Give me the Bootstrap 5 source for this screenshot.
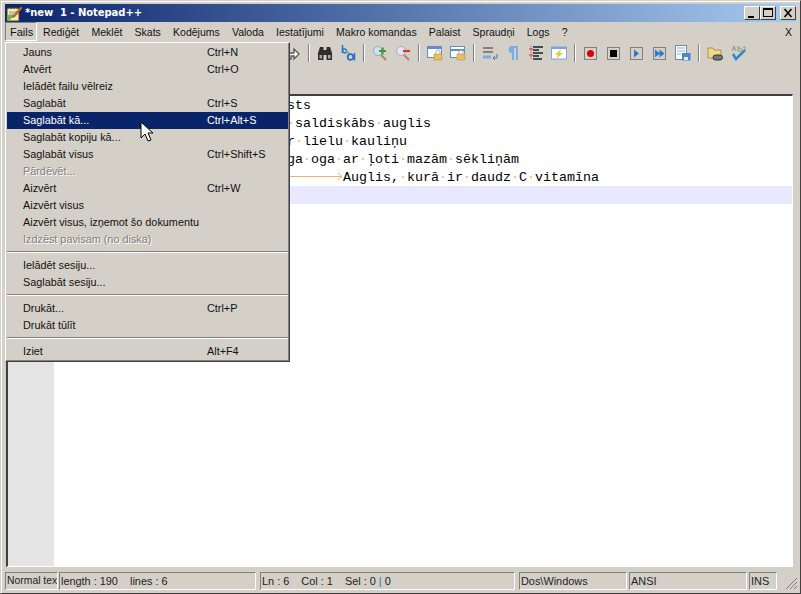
<!DOCTYPE html>
<html lang="en">
<head>
<meta charset="UTF-8">
<title>*new 1 - Notepad++</title>
<link rel="stylesheet" href="https://cdn.jsdelivr.net/npm/bootstrap@5.3.3/dist/css/bootstrap.min.css">
<script src="https://cdn.jsdelivr.net/npm/bootstrap@5.3.3/dist/js/bootstrap.bundle.min.js"></script>
<style>
html,body{margin:0;height:594px;overflow:hidden;background:#d4d0c8}
body{font:11px/13px "Liberation Sans",sans-serif;color:#000}
.npp-win{position:relative;width:801px;height:594px;background:#d4d0c8;padding:3px 4px 4px;border:1px solid #404040;border-top-color:#d4d0c8;border-left-color:#d4d0c8;box-shadow:inset 1px 1px 0 #fff}
.npp-title{height:18px;background:linear-gradient(90deg,#0a246a,#a6caf0);color:#fff;font:bold 10px/18px "DejaVu Sans",sans-serif;padding-left:1px;letter-spacing:-.05px}
.npp-title>svg{margin-right:2px}
.win-btn{width:16px;height:14px;background:#d4d0c8;border:1px solid;border-color:#fff #404040 #404040 #fff}
.win-btn svg{display:block}
.npp-menu{height:20px;font:10.5px/20px "Liberation Sans",Arial,sans-serif;color:#111}
.npp-menu span{padding:0 6.1px;display:block;height:19px}
.npp-menu .open-item{border:1px solid;border-color:#808080 #fff #fff #808080;line-height:18px;padding:0 4px;width:32px;font-size:11px}
.npp-menu .menu-close{padding-right:4px;margin-left:auto}
.npp-tools{height:22px;padding-left:276px}
.tool{width:16px;height:16px;display:block;margin:0 3.5px;flex:none}
.tool-sep{width:2px;height:18px;background:#808080;border-right:1px solid #fff;margin:0 3.5px;flex:none;display:block}
.npp-tabs{height:30px}
.npp-edit{height:473px;margin:0 3px 5px 1px;border:solid;border-width:2px 1px 1px 2px;border-color:#404040 #fff #fff #404040;background:#fff}
.gutter{width:46px;background:#e4e4e4;flex:none}
.code-area{font:13.33px/20px "Liberation Mono","Courier New",monospace;color:#000;min-width:0;flex:1}
.code-line{height:18px;padding-left:233px;white-space:pre}
.code-line i{font-style:normal;color:#f5b06a}
.code-line.cur{background:#e8e8ff}
.tab-arrow{display:inline-block;width:56px;height:9px;vertical-align:0}
.npp-status{height:18px;font:10.9px/16px "Liberation Sans",Arial,sans-serif;color:#222}
.st-cell{border:1px solid;border-color:#808080 #fff #fff #808080;height:18px;padding-left:1px;overflow:hidden;white-space:nowrap;flex:none}
.st-a{width:53px;margin-right:1px;font-size:10.4px}
.st-b{width:197px;margin-right:4px}
.st-c{width:255px;margin-right:4px}
.st-d{width:108px;margin-right:2px}
.st-e{width:118px;margin-right:2px}
.st-f{width:28px}
.st-pipe{color:#2a6fc0}
.fmenu{position:absolute;left:4px;top:41px;width:285px;height:320px;background:#d4d0c8;border:1px solid;border-color:#fff #404040 #404040 #fff;padding:1px;font:10.85px/17px "Liberation Sans",Arial,sans-serif;color:#111;box-shadow:inset -1px -1px 0 #808080}
.fmenu-row{height:17px;padding-left:16px;display:flex;white-space:nowrap}
.fmenu-row b{font-weight:normal;width:184px;flex:none}
.fmenu-row.sel{background:#0a246a;color:#fff}
.fmenu-row.off{color:#808080;text-shadow:1px 1px 0 #fff}
.fmenu hr{margin:3px 0 4px;border:0;border-top:1px solid #808080;border-bottom:1px solid #fff;opacity:1;height:2px}
.npp-cursor{position:absolute;left:139px;top:120px}
.grip{position:absolute;right:2px;bottom:3px}
</style>
</head>
<body>
<div class="npp-win">
  <div class="npp-title d-flex align-items-center">
    <svg width="17" height="17" viewBox="0 0 17 17"><path d="M1 3h12v13H1z" fill="#f4eeb0" stroke="#444"/><path d="M1.500 10h7l-5 5.500h-2z" fill="#7fb24a"/><path d="M2 1v3M5 1v3M8 1v3M11 1v3" stroke="#333"/><path d="M3 7h8M3 9h8" stroke="#999"/><path d="M7 11L15 1.500l1.500 1.500-8 9-2 .5z" fill="#d0702a" stroke="#7a3a10" stroke-width=".5"/></svg>
    <span>*new&nbsp; 1 - Notepad++</span>
    <div class="ms-auto d-flex">
      <div class="win-btn"><svg width="14" height="12"><rect x="3" y="9" width="6" height="2" fill="#000"/></svg></div>
      <div class="win-btn"><svg width="14" height="12"><rect x="2.500" y="1.500" width="9" height="8" fill="none" stroke="#000"/><rect x="2" y="1" width="10" height="2" fill="#000"/></svg></div>
      <div class="win-btn ms-1"><svg width="14" height="12"><path d="M3.500 2l7 8M10.500 2l-7 8" stroke="#000" stroke-width="1.600"/></svg></div>
    </div>
  </div>
  <div class="npp-menu d-flex">
    <span class="open-item">Fails</span><span>Rediģēt</span><span>Meklēt</span><span>Skats</span><span>Kodējums</span><span>Valoda</span><span>Iestatījumi</span><span>Makro komandas</span><span>Palaist</span><span>Spraudņi</span><span>Logs</span><span>?</span>
    <span class="menu-close">X</span>
  </div>
  <div class="npp-tools d-flex align-items-center">
    <svg class="tool" viewBox="0 0 16 16"><path d="M2 14V8h7V4l5 5-5 5v-3H6v3z" fill="#fff" stroke="#555" stroke-width="1.300"/></svg>
    <i class="tool-sep"></i>
    <svg class="tool" viewBox="0 0 16 16"><path d="M1 8l2-6h3.500v3h3V2H13l2 6v7H9.500V10h-3v5H1z" fill="#2e2e2e"/><path d="M2.500 10h2.500v3.500H2.500zM11 10h2.500v3.500H11z" fill="#a8a8a8"/></svg>
    <svg class="tool" viewBox="0 0 16 16"><path d="M2.500 0v8" stroke="#2a6fc0" stroke-width="1.500"/><circle cx="4.500" cy="6" r="2" fill="none" stroke="#2a6fc0" stroke-width="1.300"/><path d="M6 6l4 3" stroke="#5a8" stroke-width="1.300"/><circle cx="10.500" cy="12" r="2.800" fill="none" stroke="#2a6fc0" stroke-width="1.800"/><path d="M14.500 8v7.500" stroke="#2a6fc0" stroke-width="1.500"/></svg>
    <i class="tool-sep"></i>
    <svg class="tool" viewBox="0 0 16 16"><circle cx="6" cy="6" r="4.500" fill="#cfe2f5" stroke="#9ab"/><path d="M9 10l5 5" stroke="#a86" stroke-width="2"/><path d="M7 6h7M10.500 2.500v7" stroke="#3a9a3a" stroke-width="2.200"/></svg>
    <svg class="tool" viewBox="0 0 16 16"><circle cx="6" cy="6" r="4.500" fill="#e6e2ee" stroke="#aac"/><path d="M9 10l5 5" stroke="#a86" stroke-width="2"/><path d="M8 6h7" stroke="#d33" stroke-width="2.200"/></svg>
    <i class="tool-sep"></i>
    <svg class="tool" viewBox="0 0 16 16"><rect x=".5" y="1.500" width="14" height="11" fill="#fff" stroke="#5f8fc8"/><path d="M1 2h13v2H1z" fill="#5f8fc8"/><path d="M7 9h8v6H7z" fill="#e6bf62" stroke="#b89548" stroke-width=".6"/><path d="M9 9V7a2 2 0 0 1 4 0v2" fill="none" stroke="#aaa"/></svg>
    <svg class="tool" viewBox="0 0 16 16"><rect x=".5" y="1.500" width="14" height="11" fill="#fff" stroke="#5f8fc8"/><path d="M1 4h13v2H1z" fill="#5f8fc8"/><path d="M7 9h8v6H7z" fill="#e6bf62" stroke="#b89548" stroke-width=".6"/><path d="M9 9V7a2 2 0 0 1 4 0v2" fill="none" stroke="#aaa"/></svg>
    <i class="tool-sep"></i>
    <svg class="tool" viewBox="0 0 16 16"><path d="M1 3h10M1 7h10" stroke="#333"/><path d="M1 12h8" stroke="#7aaee0" stroke-width="3"/><path d="M15 9v4h-4M13 11l-2 2 2 2" fill="none" stroke="#4a7ab0"/></svg>
    <svg class="tool" viewBox="0 0 16 16"><path d="M7 15V8a3.500 3.500 0 0 1 0-7h6v14h-2V3H9v12z" fill="#7aaee0"/></svg>
    <svg class="tool" viewBox="0 0 16 16"><path d="M3 1v14" stroke="#d33" stroke-dasharray="1 1"/><path d="M1 4h4M1 10h4" stroke="#d33"/><path d="M5 2h10M5 5h6M5 8h10M5 11h6M5 14h9" stroke="#123" stroke-width="1.300"/></svg>
    <svg class="tool" viewBox="0 0 16 16"><rect x=".5" y="2" width="15" height="12" fill="#fff" stroke="#7aa6d8"/><path d="M1 2h14v2H1z" fill="#7aa6d8"/><path d="M10 4L4 10h3l-2 4 7-6H9z" fill="#f0c040"/></svg>
    <i class="tool-sep"></i>
    <svg class="tool" viewBox="0 0 16 16"><rect x="1.500" y="2.500" width="12" height="12" fill="#d4d0c8" stroke="#808080"/><circle cx="7.500" cy="8.500" r="3.500" fill="#d00"/></svg>
    <svg class="tool" viewBox="0 0 16 16"><rect x="1.500" y="2.500" width="12" height="12" fill="#d4d0c8" stroke="#808080"/><rect x="4" y="5" width="7" height="7" fill="#000"/></svg>
    <svg class="tool" viewBox="0 0 16 16"><rect x="1.500" y="2.500" width="12" height="12" fill="#d4d0c8" stroke="#808080"/><path d="M5 4.500l5 4-5 4z" fill="#2a78d0"/></svg>
    <svg class="tool" viewBox="0 0 16 16"><rect x="1.500" y="2.500" width="12" height="12" fill="#d4d0c8" stroke="#808080"/><path d="M3 4.500l5 4-5 4zM7.500 4.500l5 4-5 4z" fill="#2a78d0"/></svg>
    <svg class="tool" viewBox="0 0 16 16"><rect x=".5" y=".5" width="11" height="14" fill="#fff" stroke="#5f8fc8"/><path d="M2 3h8M2 6h8M2 9h4" stroke="#8ab"/><rect x="7" y="8" width="8.500" height="7.500" fill="#4a88c8"/><rect x="9" y="12" width="4" height="3" fill="#e8e8d0"/></svg>
    <i class="tool-sep"></i>
    <svg class="tool" viewBox="0 0 16 16"><path d="M1 3h5l1 2h7v8H1z" fill="#f0d890" stroke="#b09040"/><rect x="6" y="10" width="9.500" height="5" rx="2.500" fill="#777" stroke="#333"/></svg>
    <svg class="tool" viewBox="0 0 16 16"><path d="M3 9l3 5 9-9" fill="none" stroke="#2a88d0" stroke-width="2.500"/><path d="M2 6l2-5 2 5M3 4h2M8 1v5h2a1.500 1.500 0 0 0 0-3H8M13 2h2v4h-2" fill="none" stroke="#6a9a6a" stroke-width=".8"/></svg>
  </div>
  <div class="npp-tabs"></div>
  <div class="npp-edit d-flex">
    <div class="gutter"></div>
    <div class="code-area">
      <div class="code-line">sts</div>
      <div class="code-line"><i>·</i>saldiskābs<i>·</i>auglis</div>
      <div class="code-line">r<i>·</i>lielu<i>·</i>kauliņu</div>
      <div class="code-line">ga<i>·</i>oga<i>·</i>ar<i>·</i>ļoti<i>·</i>mazām<i>·</i>sēkliņām</div>
      <div class="code-line"><svg class="tab-arrow" viewBox="0 0 56 9"><path d="M0 4.500h55M51 1l4 3.500-4 3.500" fill="none" stroke="#f5b06a"/></svg>Auglis,<i>·</i>kurā<i>·</i>ir<i>·</i>daudz<i>·</i>C<i>·</i>vitamīna</div>
      <div class="code-line cur"></div>
    </div>
  </div>
  <div class="npp-status d-flex">
    <div class="st-cell st-a">Normal tex</div>
    <div class="st-cell st-b">length : 190 &nbsp;&nbsp;&nbsp;lines : 6</div>
    <div class="st-cell st-c">Ln : 6 &nbsp;&nbsp;&nbsp;Col : 1 &nbsp;&nbsp;&nbsp;Sel : 0 <span class="st-pipe">|</span> 0</div>
    <div class="st-cell st-d">Dos\Windows</div>
    <div class="st-cell st-e">ANSI</div>
    <div class="st-cell st-f">INS</div>
  </div>
  <svg class="grip" width="14" height="14"><path d="M13 2L2 13M13 6L6 13M13 10l-3 3" stroke="#808080"/></svg>
  <div class="fmenu">
    <div class="fmenu-row"><b>Jauns</b><span>Ctrl+N</span></div>
    <div class="fmenu-row"><b>Atvērt</b><span>Ctrl+O</span></div>
    <div class="fmenu-row"><b>Ielādēt failu vēlreiz</b></div>
    <div class="fmenu-row"><b>Saglabāt</b><span>Ctrl+S</span></div>
    <div class="fmenu-row sel"><b>Saglabāt kā...</b><span>Ctrl+Alt+S</span></div>
    <div class="fmenu-row"><b>Saglabāt kopiju kā...</b></div>
    <div class="fmenu-row"><b>Saglabāt visus</b><span>Ctrl+Shift+S</span></div>
    <div class="fmenu-row off"><b>Pārdēvēt...</b></div>
    <div class="fmenu-row"><b>Aizvērt</b><span>Ctrl+W</span></div>
    <div class="fmenu-row"><b>Aizvērt visus</b></div>
    <div class="fmenu-row"><b>Aizvērt visus, izņemot šo dokumentu</b></div>
    <div class="fmenu-row off"><b>Izdzēst pavisam (no diska)</b></div>
    <hr>
    <div class="fmenu-row"><b>Ielādēt sesiju...</b></div>
    <div class="fmenu-row"><b>Saglabāt sesiju...</b></div>
    <hr>
    <div class="fmenu-row"><b>Drukāt...</b><span>Ctrl+P</span></div>
    <div class="fmenu-row"><b>Drukāt tūlīt</b></div>
    <hr>
    <div class="fmenu-row"><b>Iziet</b><span>Alt+F4</span></div>
  </div>
  <svg class="npp-cursor" width="14" height="22" viewBox="0 0 14 22"><path d="M1 1v16l4-4 3 7 3-1-3-7h5z" fill="#fff" stroke="#000"/></svg>
</div>
</body>
</html>
